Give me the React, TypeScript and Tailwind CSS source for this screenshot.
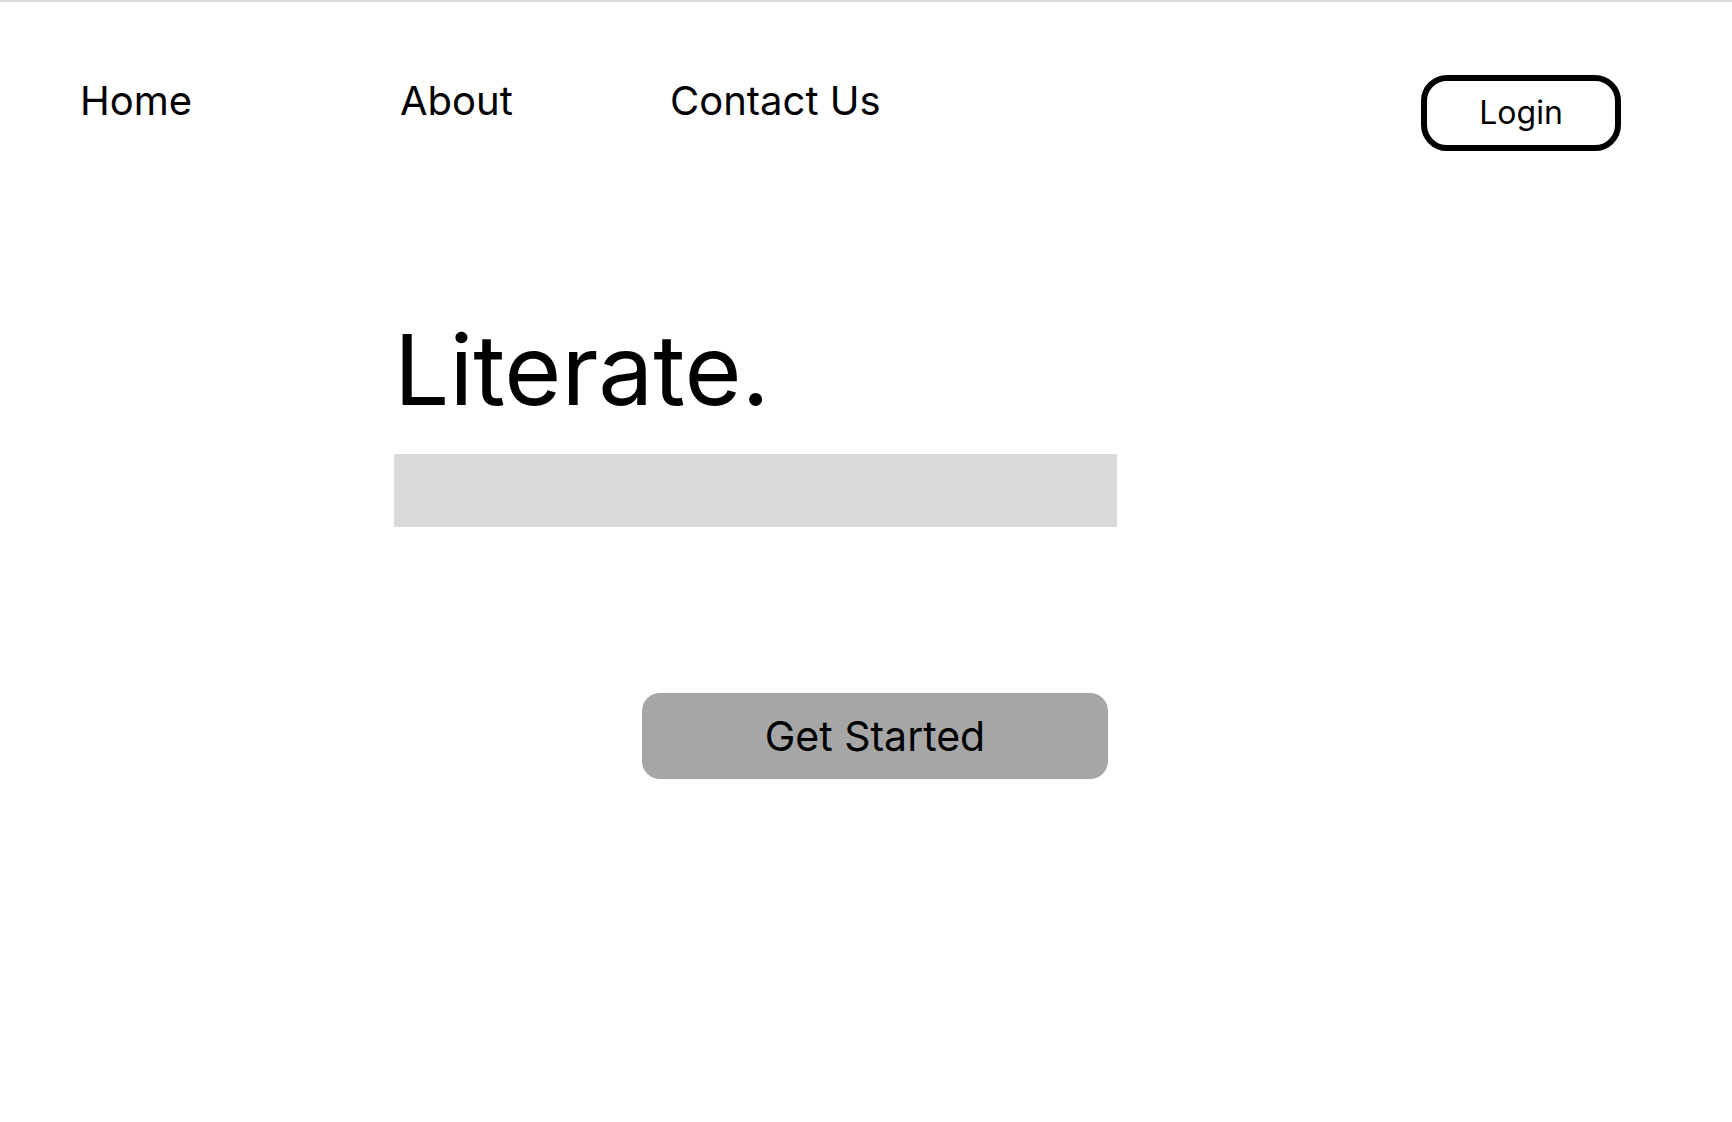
const navLinks = [
  { label: 'Home', width: 'w-[320px]' },
  { label: 'About', width: 'w-[270px]' },
  { label: 'Contact Us', width: '' },
];

export default function App() {
  return (
    <div className="min-h-[1122px] w-full bg-white border-t-2 border-[#dadada] font-['Inter',sans-serif] text-black">
      <nav className="flex items-start justify-between pl-[80px] pr-[111px] pt-[73px]">
        <ul className="mt-[2px] flex items-start">
          {navLinks.map((link) => (
            <li key={link.label} className={`${link.width} text-[40px] leading-[48px]`}>
              {link.label}
            </li>
          ))}
        </ul>
        <button className="flex h-[76px] w-[200px] items-center justify-center rounded-[26px] border-[6px] border-black text-[32px] leading-none">
          Login
        </button>
      </nav>

      <main className="mt-[170px] pl-[394px]">
        <h1 className="text-[98px] leading-none font-normal">Literate.</h1>
        <div className="mt-[35px] h-[73px] w-[723px] bg-[#d9d9d9]"></div>
        <button className="ml-[248px] mt-[166px] flex h-[86px] w-[466px] items-center justify-center rounded-[18px] bg-[#a6a6a6] text-[41px] leading-none">
          Get Started
        </button>
      </main>
    </div>
  );
}
